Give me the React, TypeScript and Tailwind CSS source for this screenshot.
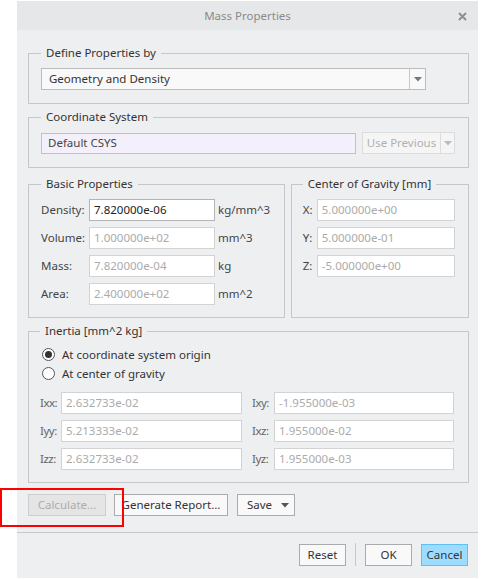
import type { ReactNode } from "react";

const font = { fontFamily: '"Noto Sans", "Open Sans", sans-serif' };

function Group({ label, className, children }: { label: string; className?: string; children: ReactNode }) {
  return (
    <fieldset className={`border border-[#c6c7c9] px-[12px] ${className ?? ""}`}>
      <legend className="px-[5px] text-[11.5px] leading-[16px] text-[#333]">{label}</legend>
      {children}
    </fieldset>
  );
}

function Field({ value, width, active }: { value: string; width: string; active?: boolean }) {
  return (
    <div
      className={`flex h-[22px] items-center border px-[4px] text-[11.5px] ${width} ${
        active ? "border-[#b4b4b4] bg-white text-[#222]" : "border-[#d3d3d3] bg-white text-[#ababab]"
      }`}
    >
      {value}
    </div>
  );
}

function Caret({ color = "#777" }: { color?: string }) {
  return (
    <svg width="8" height="5" viewBox="0 0 8 5">
      <path d="M0 0h8L4 4.5z" fill={color} />
    </svg>
  );
}

function Radio({ checked, label }: { checked?: boolean; label: string }) {
  return (
    <div className="flex h-[19px] items-center gap-[7px] pl-[2px]">
      <span className="flex h-[13px] w-[13px] items-center justify-center rounded-full border border-[#555] bg-white">
        {checked && <span className="h-[7px] w-[7px] rounded-full bg-[#333]" />}
      </span>
      <span className="text-[11.5px] text-[#333]">{label}</span>
    </div>
  );
}

const basic = [
  { label: "Density:", value: "7.820000e-06", unit: "kg/mm^3", active: true },
  { label: "Volume:", value: "1.000000e+02", unit: "mm^3" },
  { label: "Mass:", value: "7.820000e-04", unit: "kg" },
  { label: "Area:", value: "2.400000e+02", unit: "mm^2" },
];

const cog = [
  { label: "X:", value: "5.000000e+00" },
  { label: "Y:", value: "5.000000e-01" },
  { label: "Z:", value: "-5.000000e+00" },
];

const inertia = [
  ["Ixx:", "2.632733e-02", "Ixy:", "-1.955000e-03"],
  ["Iyy:", "5.213333e-02", "Ixz:", "1.955000e-02"],
  ["Izz:", "2.632733e-02", "Iyz:", "1.955000e-03"],
];

export default function App() {
  return (
    <div className="relative h-[579px] w-[481px] bg-white" style={font}>
      <div className="ml-[17px] mt-[1px] flex h-[577px] w-[461px] flex-col bg-[#eeeff1]">
        {/* title bar */}
        <div className="relative flex h-[29px] items-center justify-center bg-[#e6e7e9]">
          <span className="text-[11.5px] text-[#8a8a8a]">Mass Properties</span>
          <svg className="absolute right-[11px] top-[11px]" width="9" height="9" viewBox="0 0 9 9">
            <path d="M1 1l7 7M8 1L1 8" stroke="#8f8f8f" strokeWidth="2" />
          </svg>
        </div>

        <div className="flex flex-col pl-[11px] pr-[9px]">
          <Group label="Define Properties by" className="mt-[15px] pb-[13px] pt-[7px]">
            <div className="flex h-[22px] w-[385px] border border-[#bdbdbd] bg-[#f9f9f9]">
              <div className="flex flex-1 items-center px-[7px] text-[11.5px] text-[#333]">Geometry and Density</div>
              <div className="flex w-[16px] items-center justify-center border-l border-[#c8c8c8]">
                <Caret />
              </div>
            </div>
          </Group>

          <Group label="Coordinate System" className="mt-[5px] pb-[13px] pt-[7px]">
            <div className="flex items-center gap-[6px]">
              <div className="flex h-[21px] w-[315px] items-center border border-[#c2c2c2] bg-[#f3f0fc] px-[6px] text-[11.5px] text-[#444]">
                Default CSYS
              </div>
              <div className="flex h-[22px] w-[93px] border border-[#dcdcdc] bg-[#f5f5f5]">
                <div className="flex flex-1 items-center justify-center text-[11.5px] text-[#b0b0b0]">Use Previous</div>
                <div className="flex w-[14px] items-center justify-center border-l border-[#dcdcdc]">
                  <Caret color="#bbb" />
                </div>
              </div>
            </div>
          </Group>

          <div className="mt-[8px] flex gap-[6px]">
            <Group label="Basic Properties" className="w-[258px] pb-[12px] pt-[7px]">
              <div className="flex flex-col gap-[6px]">
                {basic.map((r) => (
                  <div key={r.label} className="flex items-center">
                    <span className="w-[48px] text-[11.5px] text-[#444]">{r.label}</span>
                    <Field value={r.value} width="w-[126px]" active={r.active} />
                    <span className="ml-[3px] text-[11.5px] text-[#444]">{r.unit}</span>
                  </div>
                ))}
              </div>
            </Group>
            <Group label="Center of Gravity [mm]" className="w-[179px] pb-[12px] pt-[7px] !pl-[11px]">
              <div className="flex flex-col gap-[6px]">
                {cog.map((r) => (
                  <div key={r.label} className="flex items-center">
                    <span className="w-[14px] text-[11.5px] text-[#444]">{r.label}</span>
                    <Field value={r.value} width="w-[138px]" />
                  </div>
                ))}
              </div>
            </Group>
          </div>

          <Group label="Inertia [mm^2 kg]" className="mt-[5px] pb-[12px] pt-[6px] !pl-[11px]">
            <Radio checked label="At coordinate system origin" />
            <Radio label="At center of gravity" />
            <div className="mt-[9px] flex flex-col gap-[6px]">
              {inertia.map(([a, av, b, bv]) => (
                <div key={a} className="flex items-center">
                  <span className="w-[21px] text-[11.5px] tracking-[-0.5px] text-[#666]">{a}</span>
                  <Field value={av} width="w-[181px]" />
                  <span className="ml-[10px] w-[22px] text-[11.5px] tracking-[-0.5px] text-[#666]">{b}</span>
                  <Field value={bv} width="w-[180px]" />
                </div>
              ))}
            </div>
          </Group>

          <div className="mt-[11px] flex items-center">
            <button className="flex h-[22px] w-[78px] items-center justify-center border border-[#cdcdcd] bg-[#e5e5e5] text-[11.5px] text-[#adadad]">
              Calculate...
            </button>
            <button className="ml-[8px] flex h-[22px] w-[114px] items-center justify-center border border-[#ababab] bg-[#f9f9f9] text-[11.5px] text-[#333]">
              Generate Report...
            </button>
            <button className="ml-[9px] flex h-[22px] w-[58px] items-center border border-[#ababab] bg-[#f9f9f9] pl-[9px] pr-[5px] text-[11.5px] text-[#333]">
              <span className="flex-1 text-left">Save</span>
              <Caret color="#555" />
            </button>
          </div>
        </div>

        <div className="mt-[16px] h-px bg-[#c8c8c8]" />

        <div className="mt-[10px] flex items-center justify-end pr-[10px]">
          <button className="flex h-[22px] w-[47px] items-center justify-center border border-[#ababab] bg-[#f9f9f9] text-[11.5px] text-[#333]">
            Reset
          </button>
          <div className="mx-[9px] h-[23px] w-px bg-[#c8c8c8]" />
          <button className="flex h-[22px] w-[47px] items-center justify-center border border-[#ababab] bg-[#f9f9f9] text-[11.5px] text-[#333]">
            OK
          </button>
          <button className="ml-[9px] flex h-[22px] w-[47px] items-center justify-center border border-[#5fc0f5] bg-[#9ddcff] text-[11.5px] text-[#333]">
            Cancel
          </button>
        </div>
      </div>

      {/* annotation highlight */}
      <div className="absolute left-0 top-[487px] h-[39px] w-[124px] border-2 border-[#f00]" />
    </div>
  );
}
